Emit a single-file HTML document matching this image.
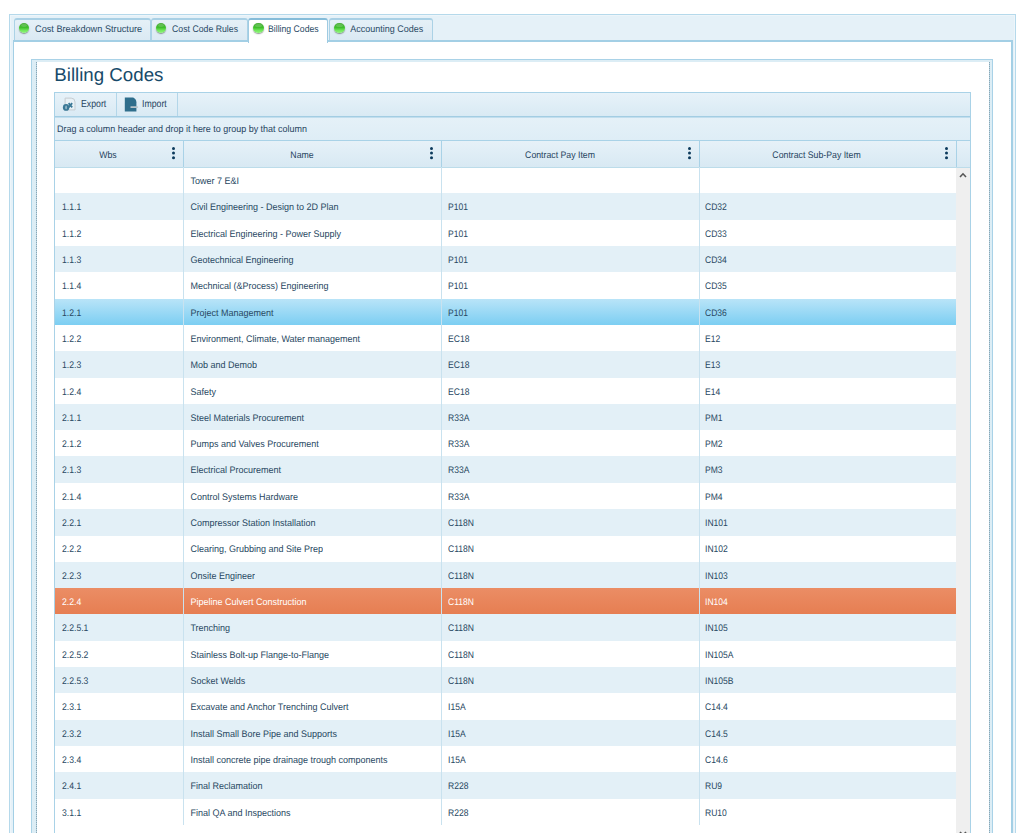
<!DOCTYPE html><html><head><meta charset="utf-8"><title>Billing Codes</title><style>
*{margin:0;padding:0;box-sizing:border-box}
html,body{width:1024px;height:833px;overflow:hidden;background:#fff}
body{position:relative;font-family:"Liberation Sans",sans-serif;color:#284862;text-rendering:geometricPrecision}
.abs{position:absolute}
.t{display:inline-block;transform-origin:0 50%;white-space:nowrap}
#outer{left:9px;top:14px;width:1007px;height:900px;border:1px solid #b5d9eb;background:#e5f1f8}
#outer2{left:10px;top:15px;width:1005px;height:900px;border:1px solid #edf5fa;border-bottom:none}
.tab{position:absolute;top:18px;height:23px;border:1px solid #abd2e6;border-top:2px solid #a9d0e5;border-bottom:none;border-radius:3px 3px 0 0;
 background:linear-gradient(#e5f0f7,#dae9f3);font-size:9px;color:#2a4b66;line-height:20px;white-space:nowrap;z-index:1}
.tab.act{background:#fff;border-color:#9fcbe2;border-top:2px solid #85bcd9;height:24.5px;z-index:3}
.dot{position:absolute;left:4.2px;top:2.9px;width:10.4px;height:10.4px;border-radius:50%;
 background:linear-gradient(#4fae3f 0%,#3fbf2c 45%,#74e85e 75%,#90f57c 100%);box-shadow:0 1px 1.2px rgba(40,60,40,.5)}
.dot:before{content:"";position:absolute;left:2px;top:1px;width:6.4px;height:3px;border-radius:50%;background:rgba(255,255,255,.15)}
.tab .t{position:absolute;left:20.2px;top:-0.7px}
#content{left:13px;top:40px;width:1000px;height:900px;border:2px solid #a3cfe5;border-top-width:2px;border-left-width:1.5px;background:#fff;z-index:2}
#inner{left:31px;top:59px;width:962px;height:900px;border:1px solid #a9d2e7;z-index:4}
#inner2{left:32px;top:60px;width:960px;height:900px;border:2px solid #dcedf5;border-left-width:4px;z-index:4}
.vdot{position:absolute;top:62px;width:1px;height:900px;background:repeating-linear-gradient(#8aa6b5 0 1px,#b3d3e2 1px 2px);z-index:6}
#title{left:54.3px;top:63.6px;font-size:18.7px;line-height:22px;color:#174a6a;z-index:5;white-space:nowrap}
#grid{left:54px;top:92px;width:917px;height:900px;border:1px solid #a9d2e7;border-bottom:none;background:#fff;z-index:5}
#toolbar{left:0;top:0;width:100%;height:24px;background:linear-gradient(#e7f2f9,#d9eaf4);border-bottom:1px solid #a3cde3;box-shadow:0 1px 0 rgba(169,210,231,.6);z-index:2}
.tb{position:absolute;top:0;height:23px;border-right:1px solid #b3d6e9;font-size:9px;color:#27445f;line-height:23px}
.tb .t{position:absolute;left:25.5px;top:0;transform:scale(0.97,1.12)}
#group{left:0;top:24px;width:100%;height:24px;background:linear-gradient(#e5f1f8,#deedf6);border-bottom:1px solid #a9d2e7;font-size:9px;line-height:23px;color:#27445f;white-space:nowrap}
#group .t{position:absolute;left:2.3px;top:1px;transform:scale(0.995,1.06)}
#head{left:0;top:48px;width:100%;height:27px;background:linear-gradient(#e6f1f8,#d8e9f3);border-bottom:1px solid #bcdcea;z-index:3}
.hc{position:absolute;top:0;height:26px;text-align:center;font-size:9px;line-height:26px;color:#27445f}
.hc .t{transform-origin:50% 50%;transform:scale(0.97,1.06);position:relative;top:1px}
.hsep{position:absolute;top:0;width:1px;height:26px;background:#a9d2e7}
.kebab{position:absolute;top:5.8px;width:3px;height:3px;border-radius:50%;background:#0c3a5c;
 box-shadow:0 4.6px 0 #0c3a5c,0 9.2px 0 #0c3a5c}
.row{position:absolute;left:0;width:901.5px;height:26.4px;font-size:9px;line-height:26.32px;color:#284862;white-space:nowrap}
.row.alt{background:#e3f0f7}
.row.sel{background:linear-gradient(#b9e4f8,#7ccef2)}
.row.org{background:linear-gradient(#eb8d65,#e67e52);color:#fff}
.cell{position:absolute;top:1.0px;height:26.32px}
.cell .t{transform:scale(1,1.06)}
.csep{position:absolute;top:0;width:1px;background:#c9e2ef;z-index:3}
#sb{left:901px;top:75px;width:14px;height:900px;background:#efefef;z-index:4}
</style></head><body>
<div id="outer" class="abs"></div><div id="outer2" class="abs"></div>
<div class="tab" style="left:13.5px;width:137.0px"><div class="dot"></div><span class="t" style="transform:scale(1.02,1.06);margin-left:0px">Cost Breakdown Structure</span></div>
<div class="tab" style="left:150.5px;width:97.5px"><div class="dot"></div><span class="t" style="transform:scale(0.97,1.06);margin-left:0px">Cost Code Rules</span></div>
<div class="tab act" style="left:248.0px;width:80.0px"><div class="dot"></div><span class="t" style="transform:scale(0.965,1.06);margin-left:-1.0px">Billing Codes</span></div>
<div class="tab" style="left:329.0px;width:104.0px"><div class="dot"></div><span class="t" style="transform:scale(1.0,1.06);margin-left:0px">Accounting Codes</span></div>
<div id="content" class="abs"></div>
<div id="inner" class="abs"></div><div id="inner2" class="abs"></div>
<div class="vdot" style="left:35.5px"></div><div class="vdot" style="left:989px"></div>
<div id="title" class="abs">Billing Codes</div>
<div id="grid" class="abs"><div id="toolbar" class="abs"><div class="tb" style="left:0;width:61.5px"><svg style="position:absolute;left:7px;top:3.5px" width="16" height="16" viewBox="0 0 16 16"><path d="M3.1 1.1H9.2Q13 1.2 13 5V12.9H3.1z" fill="#e8f1f6" stroke="#c5ccd1" stroke-width="1" stroke-linejoin="round"/><ellipse cx="4.1" cy="10.4" rx="3.2" ry="3.4" fill="#3a7896"/><ellipse cx="4.1" cy="10.4" rx="1" ry="1.9" fill="#8db3c5"/><path d="M6.6 6.1l3.6 4.3M10.2 6.1L6.6 10.4" stroke="#3a7896" stroke-width="1.7"/></svg><span class="t">Export</span></div><div class="tb" style="left:61.5px;width:61.5px"><svg style="position:absolute;left:7px;top:3.5px" width="16" height="16" viewBox="0 0 16 16"><path d="M0.8 0.5H8.4C10.6 0.5 12.4 3 12.4 5.3V14.4H0.8z" fill="#2f6e8c"/><path d="M7.2 10.1H13.2" stroke="#b9c3c9" stroke-width="1.9" stroke-linecap="round"/></svg><span class="t">Import</span></div></div><div id="group" class="abs"><span class="t">Drag a column header and drop it here to group by that column</span></div><div id="head" class="abs"><div class="hc" style="left:0.00px;width:106.80px"><span class="t">Wbs</span></div><div class="kebab" style="left:117.20px"></div><div class="hsep" style="left:127.90px"></div><div class="hc" style="left:128.40px;width:236.60px"><span class="t">Name</span></div><div class="kebab" style="left:375.40px"></div><div class="hsep" style="left:386.10px"></div><div class="hc" style="left:386.60px;width:235.90px"><span class="t">Contract Pay Item</span></div><div class="kebab" style="left:632.90px"></div><div class="hsep" style="left:643.60px"></div><div class="hc" style="left:644.10px;width:235.80px"><span class="t">Contract Sub-Pay Item</span></div><div class="kebab" style="left:890.30px"></div><div class="hsep" style="left:901.00px"></div></div><div class="row" style="top:73.95px"><div class="cell" style="left:7.00px"><span class="t" style="transform:scale(0.96,1.06)"></span></div><div class="cell" style="left:135.40px"><span class="t" style="transform:scale(1.0,1.06)">Tower 7 E&amp;I</span></div><div class="cell" style="left:393.40px"><span class="t" style="transform:scale(0.95,1.06)"></span></div><div class="cell" style="left:650.30px"><span class="t" style="transform:scale(0.95,1.06)"></span></div></div><div class="row alt" style="top:100.27px"><div class="cell" style="left:7.00px"><span class="t" style="transform:scale(0.96,1.06)">1.1.1</span></div><div class="cell" style="left:135.40px"><span class="t" style="transform:scale(1.0,1.06)">Civil Engineering - Design to 2D Plan</span></div><div class="cell" style="left:393.40px"><span class="t" style="transform:scale(0.95,1.06)">P101</span></div><div class="cell" style="left:650.30px"><span class="t" style="transform:scale(0.95,1.06)">CD32</span></div></div><div class="row" style="top:126.59px"><div class="cell" style="left:7.00px"><span class="t" style="transform:scale(0.96,1.06)">1.1.2</span></div><div class="cell" style="left:135.40px"><span class="t" style="transform:scale(1.0,1.06)">Electrical Engineering - Power Supply</span></div><div class="cell" style="left:393.40px"><span class="t" style="transform:scale(0.95,1.06)">P101</span></div><div class="cell" style="left:650.30px"><span class="t" style="transform:scale(0.95,1.06)">CD33</span></div></div><div class="row alt" style="top:152.91px"><div class="cell" style="left:7.00px"><span class="t" style="transform:scale(0.96,1.06)">1.1.3</span></div><div class="cell" style="left:135.40px"><span class="t" style="transform:scale(1.0,1.06)">Geotechnical Engineering</span></div><div class="cell" style="left:393.40px"><span class="t" style="transform:scale(0.95,1.06)">P101</span></div><div class="cell" style="left:650.30px"><span class="t" style="transform:scale(0.95,1.06)">CD34</span></div></div><div class="row" style="top:179.23px"><div class="cell" style="left:7.00px"><span class="t" style="transform:scale(0.96,1.06)">1.1.4</span></div><div class="cell" style="left:135.40px"><span class="t" style="transform:scale(1.0,1.06)">Mechnical (&amp;Process) Engineering</span></div><div class="cell" style="left:393.40px"><span class="t" style="transform:scale(0.95,1.06)">P101</span></div><div class="cell" style="left:650.30px"><span class="t" style="transform:scale(0.95,1.06)">CD35</span></div></div><div class="row sel" style="top:205.55px"><div class="cell" style="left:7.00px"><span class="t" style="transform:scale(0.96,1.06)">1.2.1</span></div><div class="cell" style="left:135.40px"><span class="t" style="transform:scale(1.0,1.06)">Project Management</span></div><div class="cell" style="left:393.40px"><span class="t" style="transform:scale(0.95,1.06)">P101</span></div><div class="cell" style="left:650.30px"><span class="t" style="transform:scale(0.95,1.06)">CD36</span></div></div><div class="row" style="top:231.87px"><div class="cell" style="left:7.00px"><span class="t" style="transform:scale(0.96,1.06)">1.2.2</span></div><div class="cell" style="left:135.40px"><span class="t" style="transform:scale(1.0,1.06)">Environment, Climate, Water management</span></div><div class="cell" style="left:393.40px"><span class="t" style="transform:scale(0.95,1.06)">EC18</span></div><div class="cell" style="left:650.30px"><span class="t" style="transform:scale(0.95,1.06)">E12</span></div></div><div class="row alt" style="top:258.19px"><div class="cell" style="left:7.00px"><span class="t" style="transform:scale(0.96,1.06)">1.2.3</span></div><div class="cell" style="left:135.40px"><span class="t" style="transform:scale(1.0,1.06)">Mob and Demob</span></div><div class="cell" style="left:393.40px"><span class="t" style="transform:scale(0.95,1.06)">EC18</span></div><div class="cell" style="left:650.30px"><span class="t" style="transform:scale(0.95,1.06)">E13</span></div></div><div class="row" style="top:284.51px"><div class="cell" style="left:7.00px"><span class="t" style="transform:scale(0.96,1.06)">1.2.4</span></div><div class="cell" style="left:135.40px"><span class="t" style="transform:scale(1.0,1.06)">Safety</span></div><div class="cell" style="left:393.40px"><span class="t" style="transform:scale(0.95,1.06)">EC18</span></div><div class="cell" style="left:650.30px"><span class="t" style="transform:scale(0.95,1.06)">E14</span></div></div><div class="row alt" style="top:310.83px"><div class="cell" style="left:7.00px"><span class="t" style="transform:scale(0.96,1.06)">2.1.1</span></div><div class="cell" style="left:135.40px"><span class="t" style="transform:scale(1.0,1.06)">Steel Materials Procurement</span></div><div class="cell" style="left:393.40px"><span class="t" style="transform:scale(0.95,1.06)">R33A</span></div><div class="cell" style="left:650.30px"><span class="t" style="transform:scale(0.95,1.06)">PM1</span></div></div><div class="row" style="top:337.15px"><div class="cell" style="left:7.00px"><span class="t" style="transform:scale(0.96,1.06)">2.1.2</span></div><div class="cell" style="left:135.40px"><span class="t" style="transform:scale(1.0,1.06)">Pumps and Valves Procurement</span></div><div class="cell" style="left:393.40px"><span class="t" style="transform:scale(0.95,1.06)">R33A</span></div><div class="cell" style="left:650.30px"><span class="t" style="transform:scale(0.95,1.06)">PM2</span></div></div><div class="row alt" style="top:363.47px"><div class="cell" style="left:7.00px"><span class="t" style="transform:scale(0.96,1.06)">2.1.3</span></div><div class="cell" style="left:135.40px"><span class="t" style="transform:scale(1.0,1.06)">Electrical Procurement</span></div><div class="cell" style="left:393.40px"><span class="t" style="transform:scale(0.95,1.06)">R33A</span></div><div class="cell" style="left:650.30px"><span class="t" style="transform:scale(0.95,1.06)">PM3</span></div></div><div class="row" style="top:389.79px"><div class="cell" style="left:7.00px"><span class="t" style="transform:scale(0.96,1.06)">2.1.4</span></div><div class="cell" style="left:135.40px"><span class="t" style="transform:scale(1.0,1.06)">Control Systems Hardware</span></div><div class="cell" style="left:393.40px"><span class="t" style="transform:scale(0.95,1.06)">R33A</span></div><div class="cell" style="left:650.30px"><span class="t" style="transform:scale(0.95,1.06)">PM4</span></div></div><div class="row alt" style="top:416.11px"><div class="cell" style="left:7.00px"><span class="t" style="transform:scale(0.96,1.06)">2.2.1</span></div><div class="cell" style="left:135.40px"><span class="t" style="transform:scale(1.0,1.06)">Compressor Station Installation</span></div><div class="cell" style="left:393.40px"><span class="t" style="transform:scale(0.95,1.06)">C118N</span></div><div class="cell" style="left:650.30px"><span class="t" style="transform:scale(0.95,1.06)">IN101</span></div></div><div class="row" style="top:442.43px"><div class="cell" style="left:7.00px"><span class="t" style="transform:scale(0.96,1.06)">2.2.2</span></div><div class="cell" style="left:135.40px"><span class="t" style="transform:scale(1.0,1.06)">Clearing, Grubbing and Site Prep</span></div><div class="cell" style="left:393.40px"><span class="t" style="transform:scale(0.95,1.06)">C118N</span></div><div class="cell" style="left:650.30px"><span class="t" style="transform:scale(0.95,1.06)">IN102</span></div></div><div class="row alt" style="top:468.75px"><div class="cell" style="left:7.00px"><span class="t" style="transform:scale(0.96,1.06)">2.2.3</span></div><div class="cell" style="left:135.40px"><span class="t" style="transform:scale(1.0,1.06)">Onsite Engineer</span></div><div class="cell" style="left:393.40px"><span class="t" style="transform:scale(0.95,1.06)">C118N</span></div><div class="cell" style="left:650.30px"><span class="t" style="transform:scale(0.95,1.06)">IN103</span></div></div><div class="row org" style="top:495.07px"><div class="cell" style="left:7.00px"><span class="t" style="transform:scale(0.96,1.06)">2.2.4</span></div><div class="cell" style="left:135.40px"><span class="t" style="transform:scale(1.0,1.06)">Pipeline Culvert Construction</span></div><div class="cell" style="left:393.40px"><span class="t" style="transform:scale(0.95,1.06)">C118N</span></div><div class="cell" style="left:650.30px"><span class="t" style="transform:scale(0.95,1.06)">IN104</span></div></div><div class="row alt" style="top:521.39px"><div class="cell" style="left:7.00px"><span class="t" style="transform:scale(0.96,1.06)">2.2.5.1</span></div><div class="cell" style="left:135.40px"><span class="t" style="transform:scale(1.0,1.06)">Trenching</span></div><div class="cell" style="left:393.40px"><span class="t" style="transform:scale(0.95,1.06)">C118N</span></div><div class="cell" style="left:650.30px"><span class="t" style="transform:scale(0.95,1.06)">IN105</span></div></div><div class="row" style="top:547.71px"><div class="cell" style="left:7.00px"><span class="t" style="transform:scale(0.96,1.06)">2.2.5.2</span></div><div class="cell" style="left:135.40px"><span class="t" style="transform:scale(1.0,1.06)">Stainless Bolt-up Flange-to-Flange</span></div><div class="cell" style="left:393.40px"><span class="t" style="transform:scale(0.95,1.06)">C118N</span></div><div class="cell" style="left:650.30px"><span class="t" style="transform:scale(0.95,1.06)">IN105A</span></div></div><div class="row alt" style="top:574.03px"><div class="cell" style="left:7.00px"><span class="t" style="transform:scale(0.96,1.06)">2.2.5.3</span></div><div class="cell" style="left:135.40px"><span class="t" style="transform:scale(1.0,1.06)">Socket Welds</span></div><div class="cell" style="left:393.40px"><span class="t" style="transform:scale(0.95,1.06)">C118N</span></div><div class="cell" style="left:650.30px"><span class="t" style="transform:scale(0.95,1.06)">IN105B</span></div></div><div class="row" style="top:600.35px"><div class="cell" style="left:7.00px"><span class="t" style="transform:scale(0.96,1.06)">2.3.1</span></div><div class="cell" style="left:135.40px"><span class="t" style="transform:scale(1.0,1.06)">Excavate and Anchor Trenching Culvert</span></div><div class="cell" style="left:393.40px"><span class="t" style="transform:scale(0.95,1.06)">I15A</span></div><div class="cell" style="left:650.30px"><span class="t" style="transform:scale(0.95,1.06)">C14.4</span></div></div><div class="row alt" style="top:626.67px"><div class="cell" style="left:7.00px"><span class="t" style="transform:scale(0.96,1.06)">2.3.2</span></div><div class="cell" style="left:135.40px"><span class="t" style="transform:scale(1.0,1.06)">Install Small Bore Pipe and Supports</span></div><div class="cell" style="left:393.40px"><span class="t" style="transform:scale(0.95,1.06)">I15A</span></div><div class="cell" style="left:650.30px"><span class="t" style="transform:scale(0.95,1.06)">C14.5</span></div></div><div class="row" style="top:652.99px"><div class="cell" style="left:7.00px"><span class="t" style="transform:scale(0.96,1.06)">2.3.4</span></div><div class="cell" style="left:135.40px"><span class="t" style="transform:scale(1.0,1.06)">Install concrete pipe drainage trough components</span></div><div class="cell" style="left:393.40px"><span class="t" style="transform:scale(0.95,1.06)">I15A</span></div><div class="cell" style="left:650.30px"><span class="t" style="transform:scale(0.95,1.06)">C14.6</span></div></div><div class="row alt" style="top:679.31px"><div class="cell" style="left:7.00px"><span class="t" style="transform:scale(0.96,1.06)">2.4.1</span></div><div class="cell" style="left:135.40px"><span class="t" style="transform:scale(1.0,1.06)">Final Reclamation</span></div><div class="cell" style="left:393.40px"><span class="t" style="transform:scale(0.95,1.06)">R228</span></div><div class="cell" style="left:650.30px"><span class="t" style="transform:scale(0.95,1.06)">RU9</span></div></div><div class="row" style="top:705.63px"><div class="cell" style="left:7.00px"><span class="t" style="transform:scale(0.96,1.06)">3.1.1</span></div><div class="cell" style="left:135.40px"><span class="t" style="transform:scale(1.0,1.06)">Final QA and Inspections</span></div><div class="cell" style="left:393.40px"><span class="t" style="transform:scale(0.95,1.06)">R228</span></div><div class="cell" style="left:650.30px"><span class="t" style="transform:scale(0.95,1.06)">RU10</span></div></div><div class="csep" style="left:127.90px;top:73.95px;height:658.00px"></div><div class="csep" style="left:386.10px;top:73.95px;height:658.00px"></div><div class="csep" style="left:643.60px;top:73.95px;height:658.00px"></div><div id="sb" class="abs"><svg style="position:absolute;left:3px;top:3.5px" width="8" height="6" viewBox="0 0 8 6"><path d="M1 5L4 1.8 7 5" fill="none" stroke="#555" stroke-width="1.6"/></svg><svg style="position:absolute;left:3px;top:662.5px" width="8" height="6" viewBox="0 0 8 6"><path d="M1 1L4 4.2 7 1" fill="none" stroke="#555" stroke-width="1.6"/></svg></div></div>
</body></html>
